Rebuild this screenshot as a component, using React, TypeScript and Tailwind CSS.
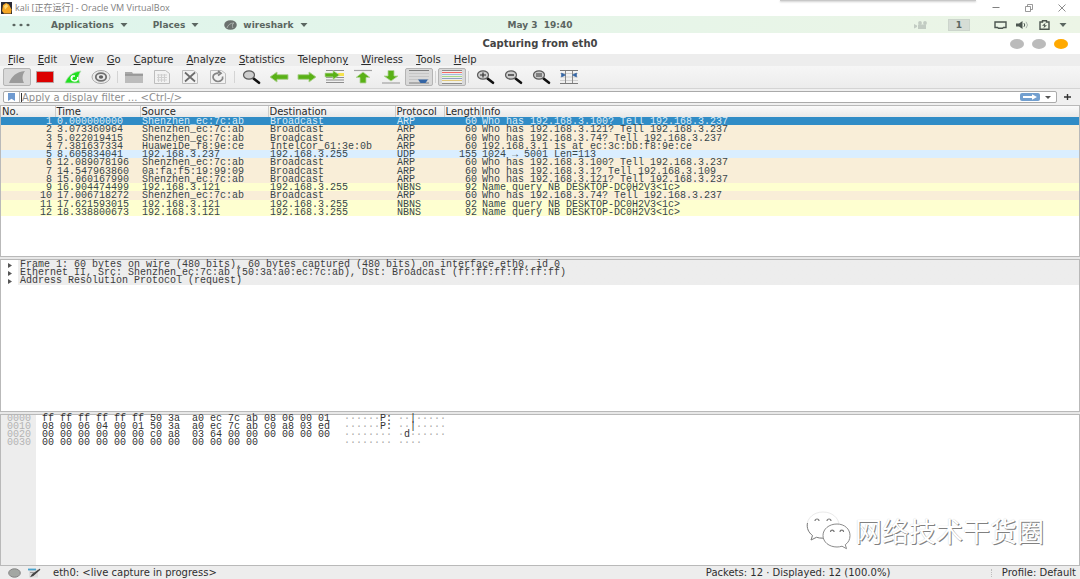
import type { ReactNode } from "react";

type Kind = "arp" | "udp" | "nbns";

interface Packet {
  no: number;
  time: string;
  source: string;
  destination: string;
  protocol: string;
  length: number;
  info: string;
  kind: Kind;
}

const packets: Packet[] = [
  { no: 1, time: "0.000000000", source: "Shenzhen_ec:7c:ab", destination: "Broadcast", protocol: "ARP", length: 60, info: "Who has 192.168.3.100? Tell 192.168.3.237", kind: "arp" },
  { no: 2, time: "3.073360964", source: "Shenzhen_ec:7c:ab", destination: "Broadcast", protocol: "ARP", length: 60, info: "Who has 192.168.3.121? Tell 192.168.3.237", kind: "arp" },
  { no: 3, time: "5.022019415", source: "Shenzhen_ec:7c:ab", destination: "Broadcast", protocol: "ARP", length: 60, info: "Who has 192.168.3.74? Tell 192.168.3.237", kind: "arp" },
  { no: 4, time: "7.381637334", source: "HuaweiDe_f8:9e:ce", destination: "IntelCor_61:3e:0b", protocol: "ARP", length: 60, info: "192.168.3.1 is at ec:3c:bb:f8:9e:ce", kind: "arp" },
  { no: 5, time: "8.605834041", source: "192.168.3.237", destination: "192.168.3.255", protocol: "UDP", length: 155, info: "1024 → 5001 Len=113", kind: "udp" },
  { no: 6, time: "12.089078196", source: "Shenzhen_ec:7c:ab", destination: "Broadcast", protocol: "ARP", length: 60, info: "Who has 192.168.3.100? Tell 192.168.3.237", kind: "arp" },
  { no: 7, time: "14.547963860", source: "0a:fa:f5:19:99:09", destination: "Broadcast", protocol: "ARP", length: 60, info: "Who has 192.168.3.1? Tell 192.168.3.109", kind: "arp" },
  { no: 8, time: "15.060167990", source: "Shenzhen_ec:7c:ab", destination: "Broadcast", protocol: "ARP", length: 60, info: "Who has 192.168.3.121? Tell 192.168.3.237", kind: "arp" },
  { no: 9, time: "16.904474499", source: "192.168.3.121", destination: "192.168.3.255", protocol: "NBNS", length: 92, info: "Name query NB DESKTOP-DC0H2V3<1c>", kind: "nbns" },
  { no: 10, time: "17.006718272", source: "Shenzhen_ec:7c:ab", destination: "Broadcast", protocol: "ARP", length: 60, info: "Who has 192.168.3.74? Tell 192.168.3.237", kind: "arp" },
  { no: 11, time: "17.621593015", source: "192.168.3.121", destination: "192.168.3.255", protocol: "NBNS", length: 92, info: "Name query NB DESKTOP-DC0H2V3<1c>", kind: "nbns" },
  { no: 12, time: "18.338800673", source: "192.168.3.121", destination: "192.168.3.255", protocol: "NBNS", length: 92, info: "Name query NB DESKTOP-DC0H2V3<1c>", kind: "nbns" },
];

const kindStyle: Record<Kind, string> = {
  arp: "bg-[#f9eed8] text-[#38464b]",
  udp: "bg-[#daeeff] text-[#38464b]",
  nbns: "bg-[#feffd0] text-[#38464b]",
};

const details = [
  "Frame 1: 60 bytes on wire (480 bits), 60 bytes captured (480 bits) on interface eth0, id 0",
  "Ethernet II, Src: Shenzhen_ec:7c:ab (50:3a:a0:ec:7c:ab), Dst: Broadcast (ff:ff:ff:ff:ff:ff)",
  "Address Resolution Protocol (request)",
];

const dump = [
  { offset: "0000", hex: "ff ff ff ff ff ff 50 3a  a0 ec 7c ab 08 06 00 01", ascii: "······P: ··|·····" },
  { offset: "0010", hex: "08 00 06 04 00 01 50 3a  a0 ec 7c ab c0 a8 03 ed", ascii: "······P: ··|·····" },
  { offset: "0020", hex: "00 00 00 00 00 00 c0 a8  03 64 00 00 00 00 00 00", ascii: "········ ·d······" },
  { offset: "0030", hex: "00 00 00 00 00 00 00 00  00 00 00 00", ascii: "········ ····" },
];

const menus: [string, number][] = [
  ["File", 0],
  ["Edit", 0],
  ["View", 0],
  ["Go", 0],
  ["Capture", 0],
  ["Analyze", 0],
  ["Statistics", 0],
  ["Telephony", 8],
  ["Wireless", 0],
  ["Tools", 0],
  ["Help", 0],
];

function Caret() {
  return (
    <svg width="8" height="4" viewBox="0 0 8 4" className="shrink-0" aria-hidden="true">
      <path d="M0.5 0h7L4 4z" fill="currentColor" />
    </svg>
  );
}

function Icon({ children }: { children: ReactNode }) {
  return (
    <svg width="22" height="16" viewBox="0 0 22 16" aria-hidden="true" className="shrink-0">
      {children}
    </svg>
  );
}

function Tool({ label, pressed = false, children }: { label: string; pressed?: boolean; children: ReactNode }) {
  return (
    <button
      type="button"
      aria-label={label}
      className={
        pressed
          ? "flex h-[18px] w-7 items-center justify-center rounded-xs border border-[#b4b4b4] bg-[#d9d9d9]"
          : "flex h-[18px] w-7 items-center justify-center"
      }
    >
      <Icon>{children}</Icon>
    </button>
  );
}

function Separator() {
  return (
    <div className="flex w-[5px] justify-center">
      <div className="h-3 w-px bg-[#d4d4d4]" />
    </div>
  );
}

function Magnifier({ sign }: { sign?: "plus" | "minus" | "equal" }) {
  return (
    <>
      <path d="M13.500 9.500l5.500 4.300" stroke="#111" strokeWidth="2.600" strokeLinecap="round" />
      <ellipse cx="9" cy="6" rx="5.500" ry="4.200" fill="#cdcdcd" stroke="#5c5c5c" strokeWidth="1.200" />
      {sign === "plus" && <path d="M6 6h6M9 3.600v4.800" stroke="#333" strokeWidth="1.200" />}
      {sign === "minus" && <path d="M6 6h6" stroke="#333" strokeWidth="1.400" />}
      {sign === "equal" && <path d="M6 5h6M6 7h6" stroke="#333" strokeWidth="1" />}
    </>
  );
}

function Sheet() {
  return <path d="M3.500 1.500h11l4 3v10h-15z" fill="#f2f2f2" stroke="#bdbdbd" />;
}

function Toolbar() {
  return (
    <div className="flex h-[22px] items-center bg-linear-to-b from-[#f6f6f6] to-[#ececec] pl-[3px]">
      <Tool label="Start capture" pressed>
        <path d="M3 14C6 7 10 3 19 2c-3 4-3 8-1 12z" fill="#9b9b9b" />
      </Tool>
      <Tool label="Stop capture">
        <path d="M2.500 2.500h17v11h-17z" fill="#dc0000" stroke="#b9a0a0" />
      </Tool>
      <Tool label="Restart capture">
        <path d="M3 14C6 7 10 3 19 2c-3 4-3 8-1 12z" fill="#1fe01f" stroke="#b5dcb5" strokeWidth=".8" />
        <path d="M10 7c-2 3 0 5 2.500 5s4-2 3-4M10 7h3M10 7v2.500" fill="none" stroke="#fff" strokeWidth="1.500" />
      </Tool>
      <Tool label="Capture options">
        <ellipse cx="11" cy="8" rx="9" ry="6.500" fill="#ececec" stroke="#a9a9a9" />
        <ellipse cx="11" cy="8" rx="5.200" ry="3.900" fill="none" stroke="#707070" strokeWidth="1.800" />
        <ellipse cx="11" cy="8" rx="2.200" ry="1.700" fill="#606060" />
      </Tool>
      <Separator />
      <Tool label="Open file">
        <path d="M2 3h7l1 1.500h10V14H2z" fill="#a9a9a9" />
        <path d="M2 6.500h18V14H2z" fill="#bcbcbc" />
        <path d="M2 6h18" stroke="#888" />
      </Tool>
      <Tool label="Save file">
        <Sheet />
        <path d="M6 6h10M6 8.500h10M6 11h10M7.500 5v8M10.500 5v8M13.500 5v8" stroke="#cfcfcf" />
      </Tool>
      <Tool label="Close file">
        <Sheet />
        <path d="M6 3.500l10 9M16 3.500l-10 9" stroke="#6c6c6c" strokeWidth="1.700" />
      </Tool>
      <Tool label="Reload file">
        <Sheet />
        <path d="M15.500 7.500c1 3-2 5-4.500 5s-5-2-5-4.500S9 4 11.500 4.200M11 2l3 2.300-3 2.200" fill="none" stroke="#858585" strokeWidth="1.700" />
      </Tool>
      <Separator />
      <Tool label="Find packet">
        <Magnifier />
      </Tool>
      <Tool label="Go back">
        <path d="M2 8l7-5v2.700h11v4.600H9V13z" fill="#59b116" stroke="#a9cf8a" strokeWidth=".9" />
      </Tool>
      <Tool label="Go forward">
        <path d="M20 8l-7-5v2.700H2v4.600h11V13z" fill="#59b116" stroke="#a9cf8a" strokeWidth=".9" />
      </Tool>
      <Tool label="Go to packet">
        <path d="M2 1.500h18M2 8.500h18M2 11h18M2 13.500h18" stroke="#8d8d8d" strokeWidth="1.200" />
        <path d="M14 4h6v3h-6z" fill="#f7e34e" />
        <path d="M15.500 6L9 1.500v2.600H1v3.800h8v2.600z" fill="#59b116" stroke="#b9d8a0" strokeWidth=".7" />
      </Tool>
      <Tool label="First packet">
        <path d="M2 1.500h18" stroke="#a3a3a3" strokeWidth="1.200" />
        <path d="M11 3l7 5.500h-4V14H8V8.500H4z" fill="#59b116" stroke="#b3d39a" strokeWidth=".8" />
      </Tool>
      <Tool label="Last packet">
        <path d="M2 14h18" stroke="#a3a3a3" strokeWidth="1.200" />
        <path d="M11 12l7-5h-4V1.500H8V7H4z" fill="#59b116" stroke="#b3d39a" strokeWidth=".8" />
      </Tool>
      <Tool label="Auto scroll" pressed>
        <path d="M1 1.500h20M1 14h20" stroke="#7d7d7d" strokeWidth="1" />
        <path d="M1 4.500h20M1 7.500h20M1 10.500h20" stroke="#c6c6c6" />
        <path d="M10 10.500h10l-2.500 3.500h-5z" fill="#3465a4" />
      </Tool>
      <Separator />
      <Tool label="Colorize packets" pressed>
        <path d="M1 1.500h20v13H1z" fill="#eeeeea" />
        <path d="M1 1.500h20" stroke="#8a8a8a" />
        <path d="M1 3.500h20" stroke="#f26a66" />
        <path d="M1 5.500h20" stroke="#a3bce0" />
        <path d="M1 7.500h20" stroke="#a5d98a" />
        <path d="M1 9.500h20" stroke="#8f9fc4" />
        <path d="M1 11.500h20" stroke="#e2c878" />
        <path d="M1 14.500h20" stroke="#8a8a8a" />
      </Tool>
      <Separator />
      <Tool label="Zoom in">
        <Magnifier sign="plus" />
      </Tool>
      <Tool label="Zoom out">
        <Magnifier sign="minus" />
      </Tool>
      <Tool label="Normal size">
        <Magnifier sign="equal" />
      </Tool>
      <Tool label="Resize columns">
        <path d="M2 1.500h18M2 14.500h18" stroke="#7a7a7a" />
        <path d="M2 4.500h18M2 8h18M2 11.500h18" stroke="#cfcfcf" />
        <path d="M7.500 2v12M14.500 2v12" stroke="#8a8a8a" />
        <path d="M3.500 4v4l4-2zM18.500 4v4l-4-2z" fill="#3465a4" stroke="#3465a4" strokeWidth=".6" />
      </Tool>
    </div>
  );
}

function TitleBar() {
  return (
    <header className="flex h-4 items-center justify-between bg-white text-[#808080]">
      <div className="flex items-center gap-[3px] pl-px font-['Open_Sans','Noto_Sans_CJK_SC',sans-serif] text-[9px] leading-4">
        <svg width="11" height="12" viewBox="0 0 11 12" aria-hidden="true">
          <path d="M0 0h11v12H0z" fill="#2a2a35" />
          <path d="M1 9l1-6L5 1l3 1.500 2.500 5L10 11.500H3z" fill="#f5a623" />
          <path d="M3 4l3-2 1 2.500-3 3z" fill="#ffd873" />
        </svg>
        <span>kali [正在运行] - Oracle VM VirtualBox</span>
      </div>
      <div className="flex items-center gap-[25px] pr-[14px]">
        <button type="button" aria-label="Minimize">
          <svg width="8" height="8" viewBox="0 0 8 8"><path d="M0.500 3.500h7" stroke="currentColor" /></svg>
        </button>
        <button type="button" aria-label="Restore">
          <svg width="8" height="8" viewBox="0 0 8 8"><path d="M.5 2.500h5v5h-5zM2.500 2.500v-2h5v5h-2" fill="none" stroke="currentColor" strokeWidth=".8" /></svg>
        </button>
        <button type="button" aria-label="Close">
          <svg width="8" height="8" viewBox="0 0 8 8"><path d="M.5.5l7 7M7.500.5l-7 7" stroke="currentColor" strokeWidth=".9" /></svg>
        </button>
      </div>
    </header>
  );
}

function DesktopPanel() {
  return (
    <nav className="grid h-[17px] grid-cols-[1fr_auto_1fr] items-center bg-linear-to-r from-[#def5ec] to-[#ecf5e6] text-[9px] leading-4 font-bold text-[#5b6661]">
      <div className="flex items-center pl-3">
        <svg width="18" height="4" viewBox="0 0 18 4" aria-hidden="true">
          <ellipse cx="2" cy="2" rx="1.600" ry="1.200" fill="currentColor" />
          <ellipse cx="9" cy="2" rx="1.600" ry="1.200" fill="currentColor" />
          <ellipse cx="16" cy="2" rx="1.600" ry="1.200" fill="currentColor" />
        </svg>
        <button type="button" className="ml-[21px] flex items-center gap-[6px]">Applications <Caret /></button>
        <button type="button" className="ml-[25px] flex items-center gap-[6px]">Places <Caret /></button>
        <button type="button" className="ml-[25px] flex items-center gap-[6px]">
          <svg width="13" height="10" viewBox="0 0 13 10" aria-hidden="true">
            <ellipse cx="6.500" cy="5" rx="6.300" ry="4.800" fill="#6b716e" />
            <path d="M3 8c1-3 3-5 7-5-2 1-2 3-1 5" fill="none" stroke="#a9b0ac" />
          </svg>
          wireshark <Caret />
        </button>
      </div>
      <time className="whitespace-pre">May 3  19:40</time>
      <div className="flex items-center justify-end pr-[13px]">
        <svg width="14" height="8" viewBox="0 0 14 8" className="mr-5" aria-hidden="true">
          <path d="M4 3.500h8V8H4zM0 3l3 1.500v1.500L0 7.500z" fill="#c2ccc3" />
          <circle cx="6" cy="2" r="1.900" fill="#c2ccc3" />
          <circle cx="11" cy="2" r="1.900" fill="#c2ccc3" />
        </svg>
        <span className="mr-6 flex h-3 w-[22px] items-center justify-center border border-[#ccd5cc] bg-[#d6ddd6]">1</span>
        <svg width="13" height="8" viewBox="0 0 13 8" className="mr-[9px]" aria-hidden="true">
          <path d="M1 1h11v5.500H9.500l-1 .8h-4l-1-.8H1z" fill="none" stroke="#4c5650" strokeWidth="1.400" />
        </svg>
        <svg width="13" height="8" viewBox="0 0 13 8" className="mr-[10px]" aria-hidden="true">
          <path d="M0 2.500h3L6.500 0v8L3 5.500H0z" fill="#4c5650" />
          <path d="M8 2.200q1.500 1.800 0 3.600" fill="none" stroke="#4c5650" />
          <path d="M10 .8q3 3.200 0 6.400" fill="none" stroke="#a9b2ab" />
        </svg>
        <svg width="11" height="10" viewBox="0 0 11 10" className="mr-[9px]" aria-hidden="true">
          <path d="M1 2h2.500V.8h4V2H10v7.200H1z" fill="none" stroke="#4c5650" strokeWidth="1.400" />
          <path d="M6.500 2.800L3 5.800h2.200l-.7 2.400 3.500-3H5.800z" fill="#4c5650" />
        </svg>
        <Caret />
      </div>
    </nav>
  );
}

function WindowTitle() {
  return (
    <div className="grid h-[21px] grid-cols-[1fr_auto_1fr] items-center bg-white">
      <h1 className="col-start-2 text-[10px] leading-4 font-bold text-[#444444]">Capturing from eth0</h1>
      <div className="flex justify-end gap-2 pr-3">
        <button type="button" aria-label="Minimize window" className="h-[10px] w-[14px] rounded-[50%] bg-[#bbbbbb]" />
        <button type="button" aria-label="Maximize window" className="h-[10px] w-[14px] rounded-[50%] bg-[#bbbbbb]" />
        <button type="button" aria-label="Close window" className="h-[10px] w-[14px] rounded-[50%] bg-[#ffa900]" />
      </div>
    </div>
  );
}

function MenuBar() {
  return (
    <div className="flex h-3 items-center gap-[13px] bg-[#ededed] pl-2 text-[10px] leading-3 text-[#2b2b2b]">
      {menus.map(([name, key]) => (
        <button type="button" key={name}>
          {name.slice(0, key)}
          <u>{name[key]}</u>
          {name.slice(key + 1)}
        </button>
      ))}
    </div>
  );
}

function FilterBar() {
  return (
    <div className="flex h-[17px] items-center border-t border-[#d4d4d4] bg-[#f0f0f0] pr-[9px] pl-[3px]">
      <div className="flex h-3 flex-1 items-center rounded-xs border border-[#aaaaaa] bg-white">
        <button type="button" aria-label="Filter bookmarks" className="flex w-4 items-center justify-center self-stretch border-r border-[#b5b5b5]">
          <svg width="7" height="8" viewBox="0 0 7 8" aria-hidden="true"><path d="M0 0h7v8L3.500 5.800 0 8z" fill="#6f9ad0" /></svg>
        </button>
        <div className="ml-px h-[9px] w-px bg-[#333333]" />
        <input
          type="text"
          aria-label="Display filter"
          placeholder="Apply a display filter ... <Ctrl-/>"
          className="h-[10px] min-w-0 flex-1 bg-transparent text-[10px] leading-[10px] outline-none placeholder:text-[#8e8e8e]"
        />
        <button type="button" aria-label="Apply filter" className="flex h-2 w-5 items-center justify-center rounded-xs bg-[#729fcf]">
          <svg width="14" height="6" viewBox="0 0 14 6" aria-hidden="true"><path d="M0 2h9V.3L14 3 9 5.700V4H0z" fill="#fff" /></svg>
        </button>
        <button type="button" aria-label="Filter history" className="flex w-4 justify-center text-[#555555]">
          <svg width="6" height="3" viewBox="0 0 6 3" aria-hidden="true"><path d="M0 0h6L3 3z" fill="currentColor" /></svg>
        </button>
      </div>
      <button type="button" aria-label="Add filter button" className="ml-[7px]">
        <svg width="7" height="6" viewBox="0 0 7 6" aria-hidden="true"><path d="M0 3h7M3.500 0v6" stroke="#333" strokeWidth="1.400" /></svg>
      </button>
    </div>
  );
}

function PacketList() {
  const head = "overflow-hidden border-r border-[#cccccc] p-0 pl-px text-left font-normal whitespace-nowrap";
  return (
    <section className="grow basis-0 border border-[#b9b9b9] bg-white">
      <table className="h-[110px] w-full table-fixed border-collapse">
        <colgroup>
          <col className="w-[54px]" />
          <col className="w-[85px]" />
          <col className="w-[128px]" />
          <col className="w-[127px]" />
          <col className="w-[49px]" />
          <col className="w-9" />
          <col />
        </colgroup>
        <thead>
          <tr className="h-[11px] bg-linear-to-b from-[#fafafa] to-[#e9e9e9] text-[10px] leading-[10px] text-[#2b2b2b]">
            {["No.", "Time", "Source", "Destination", "Protocol", "Length"].map((name) => (
              <th key={name} scope="col" className={head}>{name}</th>
            ))}
            <th scope="col" className="p-0 pl-px text-left font-normal">Info</th>
          </tr>
        </thead>
        <tbody className="font-['Liberation_Mono',monospace] text-[10px] leading-[7px] whitespace-nowrap">
          {packets.map((p) => (
            <tr key={p.no} className={p.no === 1 ? "bg-[#308cc6] text-[#dcebf5]" : kindStyle[p.kind]}>
              <td className="p-0 pt-px pr-[3px] text-right">{p.no}</td>
              <td className="p-0 pt-px pl-[2px]">{p.time}</td>
              <td className="p-0 pt-px pl-[2px]">{p.source}</td>
              <td className="p-0 pt-px pl-[2px]">{p.destination}</td>
              <td className="p-0 pt-px pl-[2px]">{p.protocol}</td>
              <td className="p-0 pt-px pr-[3px] text-right">{p.length}</td>
              <td className="p-0 pt-px pl-[2px]">{p.info}</td>
            </tr>
          ))}
        </tbody>
      </table>
    </section>
  );
}

function PacketDetails() {
  return (
    <section className="grow basis-0 border border-[#b9b9b9] bg-white font-['Liberation_Mono',monospace] text-[10px] leading-[8px] text-[#3c3c3c]">
      <ul className="bg-linear-to-r from-white from-[17px] to-[#ededed] to-[17px] pt-px">
        {details.map((line) => (
          <li key={line} className="flex">
            <button type="button" aria-label="Expand" className="flex w-[17px] shrink-0 items-center justify-center text-[#555555]">
              <svg width="4" height="5" viewBox="0 0 4 5" aria-hidden="true"><path d="M0 0l4 2.500L0 5z" fill="currentColor" /></svg>
            </button>
            <span className="flex-1 pl-[2px] whitespace-nowrap">{line}</span>
          </li>
        ))}
      </ul>
    </section>
  );
}

function HexDump() {
  return (
    <section className="flex grow basis-0 border border-[#b9b9b9] bg-white font-['Liberation_Mono',monospace] text-[10px] leading-[8px] whitespace-pre text-[#333333]">
      <div className="w-[35px] bg-[#ededed] pl-[6px] text-[#b4b4b4]">
        {dump.map((row) => <div key={row.offset}>{row.offset}</div>)}
      </div>
      <div className="w-[302px] pl-[6px]">
        {dump.map((row) => <div key={row.offset}>{row.hex}</div>)}
      </div>
      <div className="pl-[6px]">
        {dump.map((row) => (
          <div key={row.offset}>
            {row.ascii.split(/(·+)/).map((part, i) => (
              <span key={i} className={part.startsWith("·") ? "text-[#a8a8a8]" : ""}>{part}</span>
            ))}
          </div>
        ))}
      </div>
    </section>
  );
}

function StatusBar() {
  return (
    <footer className="flex h-[13px] items-center bg-[#ededed] pr-1 pl-2 text-[10px] leading-3 text-[#2f2f2f]">
      <svg width="13" height="10" viewBox="0 0 13 10" aria-hidden="true">
        <ellipse cx="6.500" cy="5" rx="5.800" ry="4.200" fill="#a3a7a3" stroke="#858585" />
      </svg>
      <button type="button" aria-label="Capture file properties" className="ml-[7px]">
        <svg width="13" height="10" viewBox="0 0 13 10" aria-hidden="true">
          <path d="M1 1h9v8.500H1z" fill="#dcdcdc" />
          <path d="M0 1.500h8" stroke="#4aa3cc" strokeWidth="1.800" />
          <path d="M12 1.200L5 7.500l-1.500.6L4.500 6.500z" fill="#444" stroke="#444" strokeWidth="1.200" />
          <path d="M2 4.500h4" stroke="#9a9a9a" />
        </svg>
      </button>
      <span className="ml-3 flex-1">eth0: &lt;live capture in progress&gt;</span>
      <span className="w-[285px] shrink-0">Packets: 12 · Displayed: 12 (100.0%)</span>
      <span className="flex items-center gap-[10px]">
        <span className="h-2 border-l border-dotted border-[#bdbdbd]" />
        Profile: Default
      </span>
    </footer>
  );
}

function Watermark() {
  return (
    <div className="pointer-events-none absolute right-9 bottom-7 flex items-center gap-1">
      <svg width="45" height="40" viewBox="0 0 45 40" aria-hidden="true">
        <path d="M17 1C8 1 1 7 1 14.500c0 4.200 2 7.500 5.500 10L5 29l5.500-2.700c2 .6 4 .9 6.500.9 9 0 16-5.500 16-12.900S26 1 17 1z" fill="#fff" stroke="#e0e0e0" strokeWidth=".7" />
        <path d="M1.500 12C.5 17 2.500 21.500 6.500 24.500L5 29l5.500-2.700c2 .6 4 .9 6.500.9" fill="none" stroke="#808080" strokeWidth="1" />
        <path d="M31 13c-8 0-14 5-14 11.500S23 36 31 36c1.800 0 3.500-.3 5-.8l4.500 2.500-1.200-4C42.500 31.500 44 28.500 44 24.500 44 18 38.500 13 31 13z" fill="#fff" stroke="#8a8a8a" strokeWidth="1" />
        <path d="M9 10a2 2 0 0 1 4 0M21 10a2 2 0 0 1 4 0M24.500 21a1.800 1.800 0 0 1 3.600 0M34 21a1.800 1.800 0 0 1 3.600 0" fill="none" stroke="#777" strokeWidth="1.200" />
      </svg>
      <span className="font-['Noto_Sans_CJK_SC',sans-serif] text-[27px] leading-10 text-white [text-shadow:1px_1px_0_#808080,0_0_1px_#c8c8c8]">网络技术干货圈</span>
    </div>
  );
}

export default function App() {
  return (
    <div className="relative flex min-h-screen flex-col bg-[#e8e8e8] font-['DejaVu_Sans',sans-serif]">
      <div className="absolute top-0 right-[104px] h-px w-[196px] bg-[#c8c8c8] shadow-[0_1px_2px_#bbbbbb]" />
      <TitleBar />
      <DesktopPanel />
      <WindowTitle />
      <MenuBar />
      <Toolbar />
      <FilterBar />
      <main className="flex grow flex-col gap-[2px]">
        <PacketList />
        <PacketDetails />
        <HexDump />
      </main>
      <StatusBar />
      <Watermark />
    </div>
  );
}
